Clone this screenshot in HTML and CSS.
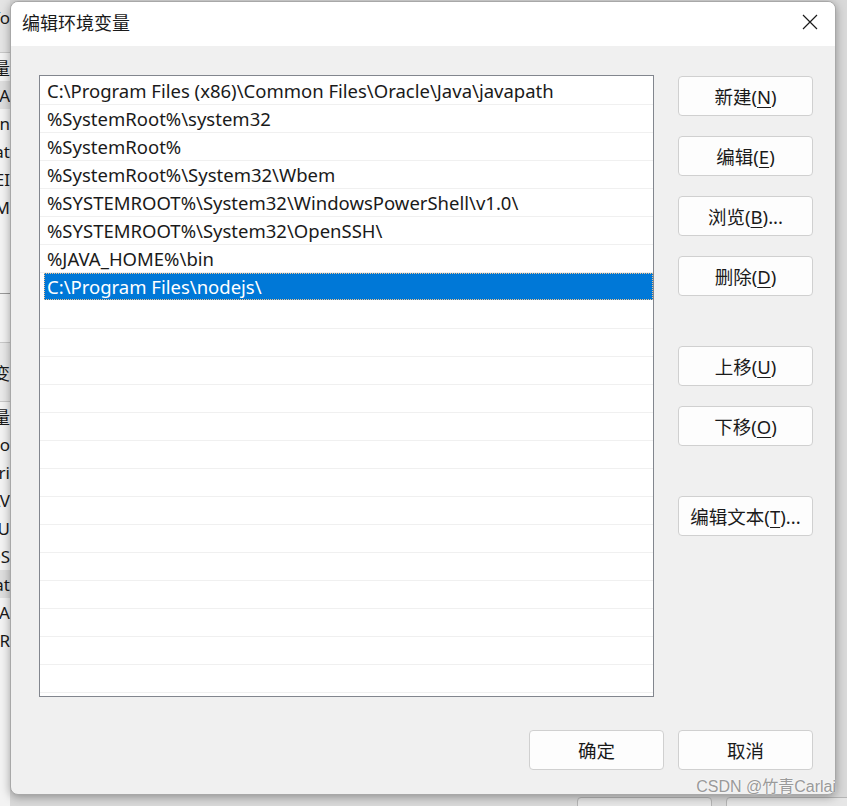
FILE: index.html
```html
<!DOCTYPE html>
<html lang="zh-CN">
<head>
  <meta charset="UTF-8">
  <title>编辑环境变量</title>
  <link rel="stylesheet" href="styles.css">
</head>
<body>
  <div class="desktop">
    <!-- window behind the dialog, only its edges show -->
    <div class="behind">
      <div class="bh-head"><span>Info</span></div>
      <div class="bh-row"><span>用户变量</span></div>
      <div class="bh-row sel"><span>JAVA</span></div>
      <div class="bh-row"><span>On</span></div>
      <div class="bh-row"><span>Pat</span></div>
      <div class="bh-row"><span>TEI</span></div>
      <div class="bh-row"><span>TM</span></div>
      <div class="bh-gap"></div>
      <div class="bh-head2"><span>系统变</span></div>
      <div class="bh-row"><span>变量</span></div>
      <div class="bh-row"><span>Co</span></div>
      <div class="bh-row"><span>Dri</span></div>
      <div class="bh-row"><span>JAV</span></div>
      <div class="bh-row"><span>NU</span></div>
      <div class="bh-row"><span>OS</span></div>
      <div class="bh-row sel"><span>Pat</span></div>
      <div class="bh-row"><span>PA</span></div>
      <div class="bh-row"><span>PR</span></div>
    </div>
    <div class="bh-buttons">
      <div class="bh-btn"></div>
      <div class="bh-btn"></div>
    </div>

    <div class="dialog">
      <div class="titlebar">
        <span class="title">编辑环境变量</span>
        <svg class="close" width="16" height="16" viewBox="0 0 16 16">
          <path d="M1 1 L15 15 M15 1 L1 15" stroke="#1a1a1a" stroke-width="1.2" fill="none"/>
        </svg>
      </div>

      <div class="main">
        <div class="list">
          <div class="row"><span class="cell">C:\Program Files (x86)\Common Files\Oracle\Java\javapath</span></div>
          <div class="row"><span class="cell">%SystemRoot%\system32</span></div>
          <div class="row"><span class="cell">%SystemRoot%</span></div>
          <div class="row"><span class="cell">%SystemRoot%\System32\Wbem</span></div>
          <div class="row"><span class="cell">%SYSTEMROOT%\System32\WindowsPowerShell\v1.0\</span></div>
          <div class="row"><span class="cell">%SYSTEMROOT%\System32\OpenSSH\</span></div>
          <div class="row"><span class="cell">%JAVA_HOME%\bin</span></div>
          <div class="row selected"><span class="cell">C:\Program Files\nodejs\</span></div>
          <div class="row"></div>
          <div class="row"></div>
          <div class="row"></div>
          <div class="row"></div>
          <div class="row"></div>
          <div class="row"></div>
          <div class="row"></div>
          <div class="row"></div>
          <div class="row"></div>
          <div class="row"></div>
          <div class="row"></div>
          <div class="row"></div>
          <div class="row"></div>
          <div class="row"></div>
          <div class="row"></div>
        </div>

        <div class="actions">
          <div class="group">
            <button>新建(<u>N</u>)</button>
            <button>编辑(<u>E</u>)</button>
            <button>浏览(<u>B</u>)...</button>
            <button>删除(<u>D</u>)</button>
          </div>
          <div class="group">
            <button>上移(<u>U</u>)</button>
            <button>下移(<u>O</u>)</button>
          </div>
          <div class="group">
            <button>编辑文本(<u>T</u>)...</button>
          </div>
        </div>
      </div>

      <div class="footer">
        <button>确定</button>
        <button>取消</button>
      </div>
    </div>

    <div class="watermark">CSDN @竹青Carlai</div>
  </div>
</body>
</html>
```

FILE: styles.css
```css
* {
  box-sizing: border-box;
}
body {
  margin: 0;
  font-family: "Noto Sans", "Noto Sans CJK SC", sans-serif;
  font-size: 17px;
  color: #1a1a1a;
  background: #cfcfcf;
}
.desktop {
  position: relative;
  width: 847px;
  height: 806px;
  overflow: hidden;
  background: #d9d9d9;
}

/* background window */
.behind {
  width: 10px;
  background: #f3f3f3;
  height: 806px;
}
.bh-head {
  height: 53px;
  background: #e4e4e4;
  border-bottom: 1px solid #c8c8c8;
  display: flex;
  justify-content: flex-end;
  padding-top: 6px;
}
.bh-head2 {
  height: 60px;
  margin-top: 48px;
  display: flex;
  justify-content: flex-end;
  align-items: center;
  border-top: 1px solid #c8c8c8;
  border-bottom: 1px solid #c8c8c8;
  background: #e9e9e9;
}
.bh-row {
  height: 28px;
  display: flex;
  justify-content: flex-end;
  align-items: center;
}
.bh-row.sel {
  background: #dedede;
}
.bh-gap {
  height: 73px;
  border-bottom: 1px solid #9a9a9a;
}
.behind span {
  white-space: nowrap;
  flex-shrink: 0;
}
.bh-buttons {
  position: absolute;
  left: 577px;
  top: 797px;
  display: flex;
  gap: 14px;
}
.bh-btn {
  width: 135px;
  height: 30px;
  border: 1px solid #b5b5b5;
  border-radius: 4px;
  background: #e6e6e6;
}

/* dialog */
.dialog {
  position: absolute;
  left: 10px;
  top: 1px;
  width: 826px;
  height: 794px;
  background: #f0f0f0;
  border: 1px solid #a8a8a8;
  border-radius: 8px;
  overflow: hidden;
  box-shadow: 0 2px 10px rgba(0, 0, 0, 0.35);
  display: flex;
  flex-direction: column;
}
.titlebar {
  height: 44px;
  background: #fff;
  display: flex;
  align-items: center;
  justify-content: space-between;
  padding: 0 17px 0 11px;
  flex-shrink: 0;
}
.title {
  font-size: 18px;
  margin-top: -5px;
}
.close {
  margin-top: -4px;
}
.main {
  display: flex;
  gap: 24px;
  padding: 29px 0 0 28px;
}
.list {
  width: 615px;
  height: 622px;
  padding-top: 1px;
  background: #fff;
  border: 1px solid #82868e;
  overflow: hidden;
}
.row {
  height: 28px;
  border-bottom: 1px solid #f0f0f0;
  display: flex;
  align-items: stretch;
  padding-left: 4px;
}
.cell {
  padding: 0 3px;
  line-height: 27px;
  white-space: nowrap;
  font-size: 18.5px;
}
.row.selected .cell {
  flex: 1;
  background: #0078d7;
  color: #fff;
  outline: 1px dotted #f5c38a;
  outline-offset: -1px;
}
.row.selected {
  border-bottom-color: #fff;
}

.actions {
  padding-top: 1px;
  display: flex;
  flex-direction: column;
  gap: 50px;
}
.group {
  display: flex;
  flex-direction: column;
  gap: 20px;
}
button {
  width: 135px;
  height: 40px;
  background: #fdfdfd;
  border: 1px solid #d0d0d0;
  border-radius: 4px;
  font-family: "Noto Sans", "Noto Sans CJK SC", sans-serif;
  font-size: 18.5px;
  color: #1a1a1a;
  padding: 0;
}
button u {
  text-underline-offset: 3px;
}
.footer {
  display: flex;
  justify-content: flex-end;
  gap: 14px;
  padding: 33px 22px 0 0;
}

.watermark {
  position: absolute;
  right: 11px;
  bottom: 9px;
  font-family: "Liberation Sans", "Noto Sans CJK SC", sans-serif;
  font-size: 16px;
  color: #9a9a9a;
  text-shadow: 0 0 2px #fff;
}
```
